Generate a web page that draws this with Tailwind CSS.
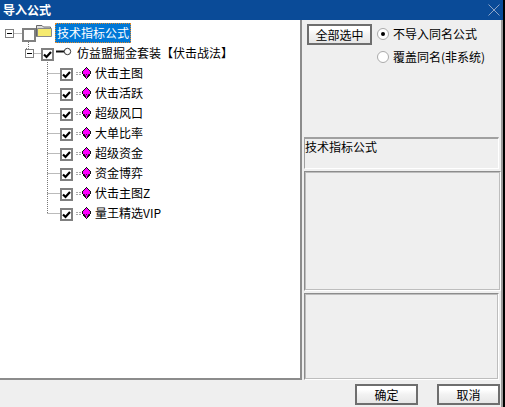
<!DOCTYPE html>
<html lang="zh">
<head>
<meta charset="utf-8">
<script src="https://cdn.jsdelivr.net/npm/@tailwindcss/browser@4"></script>
</head>
<body class="overflow-hidden bg-black">
<svg class="hidden">
  <symbol id="chk" viewBox="0 0 13 13">
    <rect x="1" y="1" width="11" height="11" fill="#fff" stroke="#808080" stroke-width="2"/>
    <path d="M3 6.5 L5.5 9 L10 4" fill="none" stroke="#000" stroke-width="2.2"/>
  </symbol>
  <symbol id="gem" viewBox="0 0 16 12">
    <path d="M0 5.5h5M0 7.5h5" stroke="#aaa" stroke-width="1" stroke-dasharray="2 1"/>
    <path d="M10.5 .5 L14.5 4.5 V6.5 L10.5 11.5 L6.5 6.5 V4.5 Z" fill="#f0f" stroke="#111" stroke-width="1" shape-rendering="crispEdges"/>
    <path d="M8 7.5h1M10 7.5h1M12 7.5h1M9 9h1M11 9h1" stroke="#600060" stroke-width="1"/>
  </symbol>
</svg>
<div class="relative flex flex-col w-[503px] h-[407px] bg-[#efefef] overflow-hidden text-xs text-black [font-family:'Noto_Sans_CJK_SC','Liberation_Sans',sans-serif]">
  <header class="flex items-center justify-between h-5 shrink-0 bg-[#0a4b98] pl-[3px] pr-[3px]">
    <span class="text-white font-bold leading-none">导入公式</span>
    <svg width="12" height="12" viewBox="0 0 12 12"><path d="M.5 .5 L11.5 11.5 M11.5 .5 L.5 11.5" stroke="#8ea5c8" stroke-width="1"/></svg>
  </header>
  <div class="flex flex-1 min-h-0 border-r-2 border-[#9a9a9a]">
    <div class="relative w-[302px] h-[360px] shrink-0 bg-white border-r-2 border-b-2 border-[#8c8c8c] pt-[3px]">
      <svg class="absolute left-0 top-0" width="100" height="200" fill="none" stroke="#777" stroke-dasharray="1 1">
        <path d="M13.5 13.5H22M28.5 22V28.5H25M33.5 33.5H41M47.5 42V193.5M47.5 53.5H60M47.5 73.5H60M47.5 93.5H60M47.5 113.5H60M47.5 133.5H60M47.5 153.5H60M47.5 173.5H60M47.5 193.5H60"/>
      </svg>
      <ul class="relative flex flex-col leading-5">
        <li class="flex items-center h-5 pl-[5px]">
          <span class="flex items-center justify-center w-[9px] h-[9px] border border-[#808080] bg-white"><span class="w-[5px] h-px bg-black"></span></span>
          <span class="ml-2 w-[14px] h-[14px] border-2 border-[#808080] bg-white mt-1"></span>
          <svg class="-mt-[6px]" width="16" height="13" viewBox="0 0 16 13"><path d="M.5 12.5V1.5H6L7.5 3H14.5V12.5Z" fill="#ddd" stroke="#666"/><path d="M1.5 4.5H15.5V12.5H1.5Z" fill="#f5ea6f" stroke="#888"/></svg>
          <span class="ml-[3px] flex items-center h-5 px-[2px] bg-[#0078d7] text-white outline-1 outline-dotted outline-[#e08a2c] -outline-offset-1">技术指标公式</span>
        </li>
        <li class="flex items-center h-5 pl-[25px]">
          <span class="flex items-center justify-center w-[9px] h-[9px] border border-[#808080] bg-white"><span class="w-[5px] h-px bg-black"></span></span>
          <svg class="ml-[7px] mt-[3px]" width="13" height="13"><use href="#chk"/></svg>
          <svg class="ml-[2px] -mt-[3px]" width="16" height="9" viewBox="0 0 16 9" fill="none" stroke="#111"><path d="M0 4.5H8" stroke-width="2"/><circle cx="11.5" cy="4.5" r="3.2" fill="#fff" stroke="#333"/></svg>
          <span class="ml-[5px] whitespace-nowrap">仿益盟掘金套装【伏击战法】</span>
        </li>
        <li class="flex items-center h-5 pl-[60px]"><svg width="13" height="13" class="mt-[2px]"><use href="#chk"/></svg><svg class="ml-[3px] -mt-[1px]" width="16" height="12"><use href="#gem"/></svg><span class="ml-[3px]">伏击主图</span></li>
        <li class="flex items-center h-5 pl-[60px]"><svg width="13" height="13" class="mt-[2px]"><use href="#chk"/></svg><svg class="ml-[3px] -mt-[1px]" width="16" height="12"><use href="#gem"/></svg><span class="ml-[3px]">伏击活跃</span></li>
        <li class="flex items-center h-5 pl-[60px]"><svg width="13" height="13" class="mt-[2px]"><use href="#chk"/></svg><svg class="ml-[3px] -mt-[1px]" width="16" height="12"><use href="#gem"/></svg><span class="ml-[3px]">超级风口</span></li>
        <li class="flex items-center h-5 pl-[60px]"><svg width="13" height="13" class="mt-[2px]"><use href="#chk"/></svg><svg class="ml-[3px] -mt-[1px]" width="16" height="12"><use href="#gem"/></svg><span class="ml-[3px]">大单比率</span></li>
        <li class="flex items-center h-5 pl-[60px]"><svg width="13" height="13" class="mt-[2px]"><use href="#chk"/></svg><svg class="ml-[3px] -mt-[1px]" width="16" height="12"><use href="#gem"/></svg><span class="ml-[3px]">超级资金</span></li>
        <li class="flex items-center h-5 pl-[60px]"><svg width="13" height="13" class="mt-[2px]"><use href="#chk"/></svg><svg class="ml-[3px] -mt-[1px]" width="16" height="12"><use href="#gem"/></svg><span class="ml-[3px]">资金博弈</span></li>
        <li class="flex items-center h-5 pl-[60px]"><svg width="13" height="13" class="mt-[2px]"><use href="#chk"/></svg><svg class="ml-[3px] -mt-[1px]" width="16" height="12"><use href="#gem"/></svg><span class="ml-[3px]">伏击主图Z</span></li>
        <li class="flex items-center h-5 pl-[60px]"><svg width="13" height="13" class="mt-[2px]"><use href="#chk"/></svg><svg class="ml-[3px] -mt-[1px]" width="16" height="12"><use href="#gem"/></svg><span class="ml-[3px]">量王精选VIP</span></li>
      </ul>
    </div>
    <div class="flex flex-col flex-1 pl-[2px]">
      <div class="flex h-[117px] pt-1 pl-[3px] shrink-0">
        <button class="w-[65px] h-[21px] border-2 border-[#6e6e6e] bg-linear-to-b from-white from-20% via-[#f2f2f2] to-[#e6e6e6] text-xs leading-none">全部选中</button>
        <div class="flex flex-col ml-[5px] gap-[6px] pt-px">
          <label class="flex items-center h-[17px]"><span class="flex items-center justify-center w-3 h-3 rounded-full border border-[#aaa] bg-white"><span class="w-1 h-1 rounded-full bg-black"></span></span><span class="ml-1 whitespace-nowrap">不导入同名公式</span></label>
          <label class="flex items-center h-[17px]"><span class="w-3 h-3 rounded-full border border-[#aaa] bg-white"></span><span class="ml-1 whitespace-nowrap">覆盖同名(非系统)</span></label>
        </div>
      </div>
      <div class="h-[32px] shrink-0 border-t-2 border-l border-r border-b border-t-[#a0a0a0] border-l-[#a0a0a0] border-r-white border-b-white leading-4 w-[195px]">技术指标公式</div>
      <div class="h-[120px] shrink-0 mt-[2px] border border-[#8c8c8c] border-r-white border-b-white outline outline-[#bdbdbd] -outline-offset-2 w-[197px]"></div>
      <div class="h-[87px] shrink-0 mt-[2px] border border-[#8c8c8c] border-r-white border-b-white outline outline-[#bdbdbd] -outline-offset-2 w-[195px]"></div>
    </div>
  </div>
  <footer class="absolute right-[3px] bottom-[2px] flex gap-[19px]">
    <button class="w-[63px] h-[21px] border-2 border-[#6e6e6e] bg-linear-to-b from-white from-20% via-[#f2f2f2] to-[#e6e6e6] text-xs leading-none">确定</button>
    <button class="w-[63px] h-[21px] border-2 border-[#6e6e6e] bg-linear-to-b from-white from-20% via-[#f2f2f2] to-[#e6e6e6] text-xs leading-none">取消</button>
  </footer>
</div>
</body>
</html>
